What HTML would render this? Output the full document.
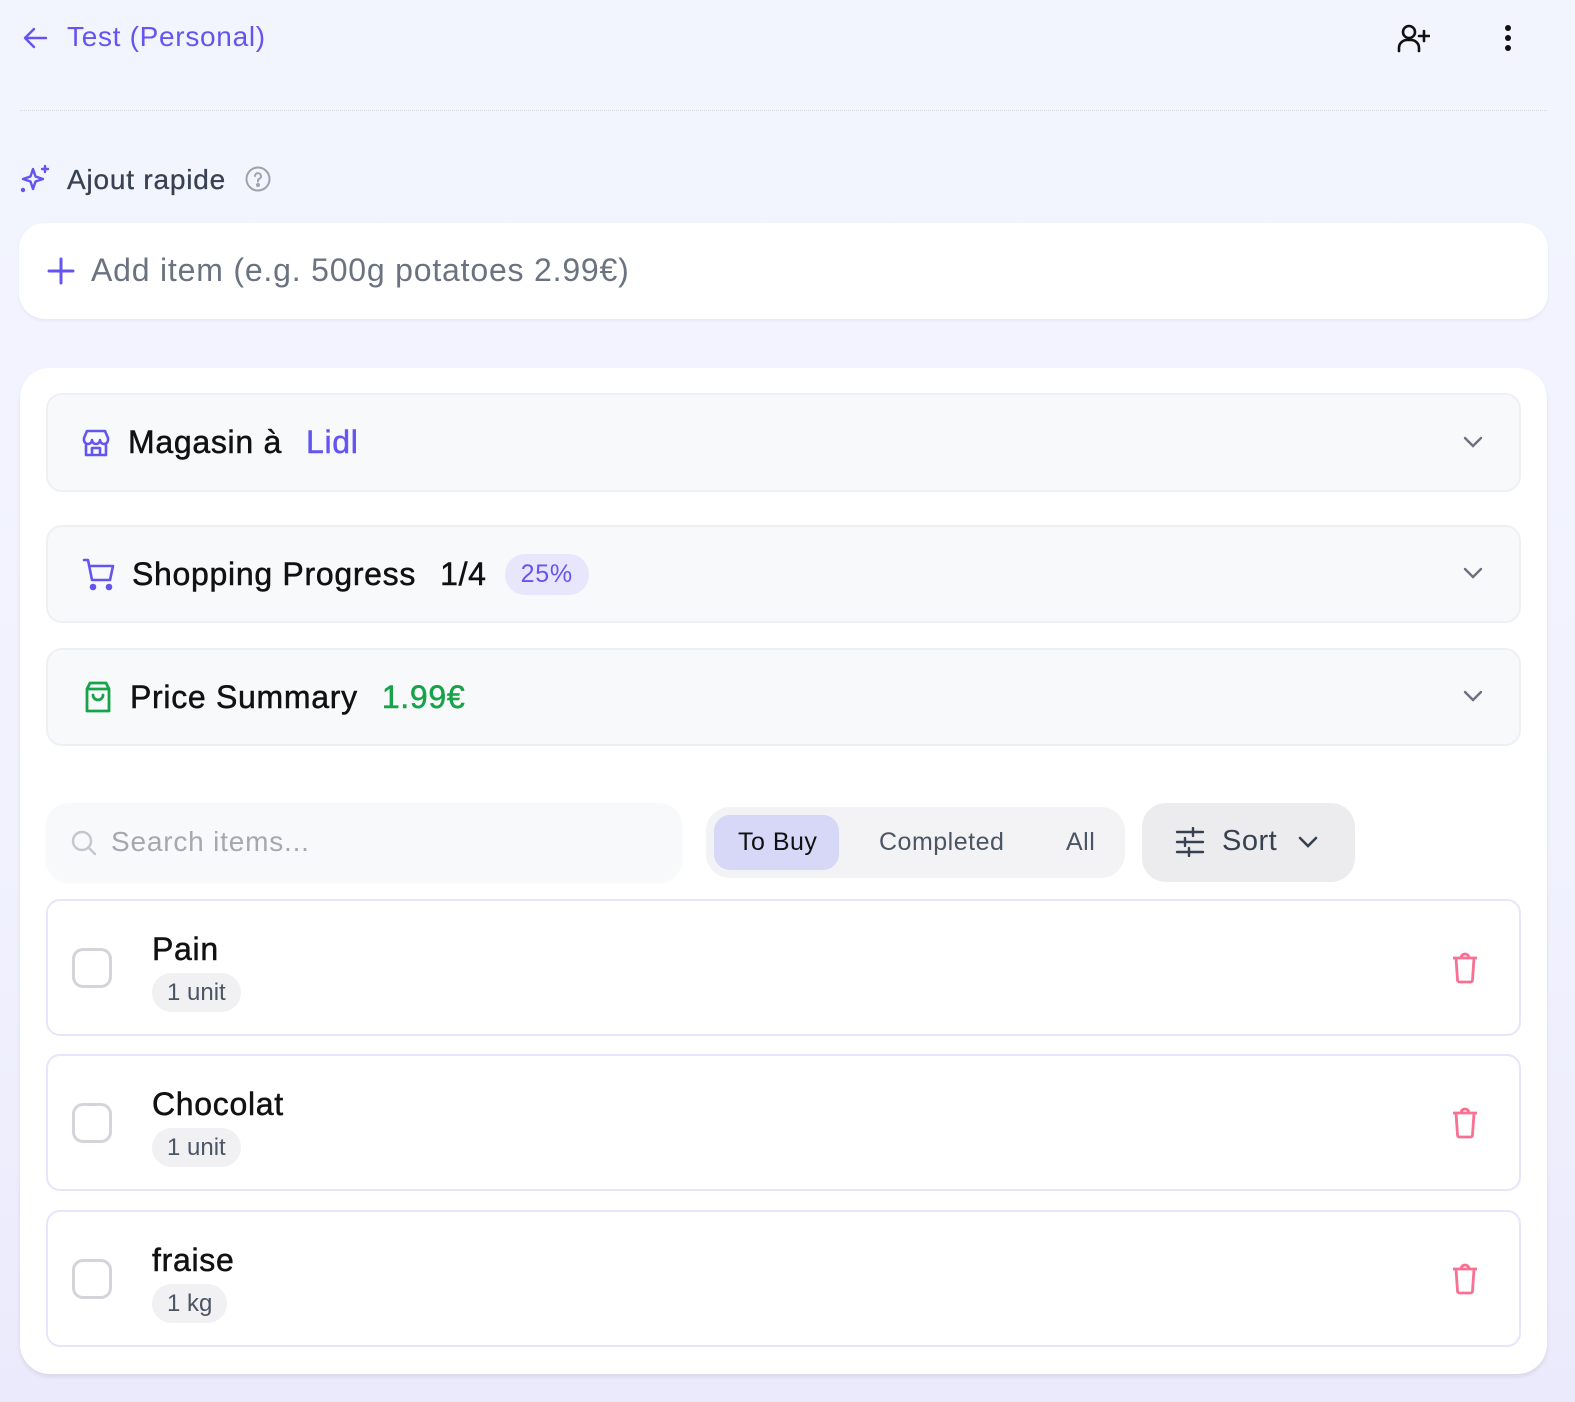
<!DOCTYPE html>
<html><head><meta charset="utf-8"><style>
*{box-sizing:border-box;margin:0;padding:0}
body{width:1575px;height:1402px;overflow:hidden;font-family:"Liberation Sans",sans-serif;background:linear-gradient(#f2f4fe 0%,#f1f2fe 60%,#ebeafc 100%);position:relative;color:#111827;letter-spacing:0.5px}
.a{position:absolute}
.sec{position:absolute;left:46px;width:1475px;background:#f8f9fb;border:2px solid #eef0f3;border-radius:16px}
.sec .t{position:absolute;top:0;height:100%;display:flex;align-items:center;font-size:32px;color:#111;-webkit-text-stroke:0.5px currentColor;letter-spacing:0.7px}
.chev{position:absolute;right:36px;top:50%;margin-top:-8px}
.item{position:absolute;left:46px;width:1475px;height:137px;background:#fff;border:2px solid #e7e5fb;border-radius:14px}
.cb{position:absolute;left:24px;top:47px;width:40px;height:40px;border:3px solid #d4d5da;border-radius:11px}
.nm{position:absolute;left:104px;top:30px;font-size:32px;color:#111;-webkit-text-stroke:0.5px #111;letter-spacing:0.7px}
.bd{position:absolute;left:104px;top:72px;height:39px;padding:0 15px;background:#f1f1f3;border-radius:20px;font-size:24px;line-height:39px;color:#4b5563;letter-spacing:0}
.tr{position:absolute;right:40px;top:50px}
</style></head><body>
<svg class="a" style="left:22px;top:26px" width="26" height="24" viewBox="0 0 26 24" fill="none" stroke="#6555f0" stroke-width="2.4" stroke-linecap="round" stroke-linejoin="round"><path d="M24 12H3M12 3l-9 9 9 9"/></svg>
<div class="a" style="left:67px;top:21px;font-size:28px;color:#6555f0;letter-spacing:0.7px">Test (Personal)</div>
<svg class="a" style="left:1396px;top:23px" width="34" height="30" viewBox="0 0 34 30" fill="none" stroke="#111" stroke-width="2.6" stroke-linecap="round"><circle cx="13" cy="9" r="6"/><path d="M3 28v-3a8 8 0 0 1 8-8h4a8 8 0 0 1 8 8v3M28 8v10M23 13h10"/></svg>
<svg class="a" style="left:1502px;top:24px" width="12" height="28"><circle cx="6" cy="4" r="3" fill="#111"/><circle cx="6" cy="14" r="3" fill="#111"/><circle cx="6" cy="24" r="3" fill="#111"/></svg>
<div class="a" style="left:20px;top:110px;width:1527px;border-top:1px dotted #d6d8de"></div>
<svg class="a" style="left:19px;top:164px" width="32" height="32" viewBox="0 0 32 32" fill="none" stroke="#6555f0" stroke-width="2.4" stroke-linejoin="round" stroke-linecap="round"><path d="M14 5l2.5 7.5L24 15l-7.5 2.5L14 25l-2.5-7.5L4 15l7.5-2.5z"/><path d="M26 2v6M23 5h6"/><circle cx="4" cy="26" r="1" fill="#6555f0"/></svg>
<div class="a" style="left:67px;top:164px;font-size:28px;color:#374151;letter-spacing:0.8px;-webkit-text-stroke:0.3px #374151">Ajout rapide</div>
<svg class="a" style="left:245px;top:166px" width="26" height="26" fill="none" stroke="#9ca3af" stroke-width="2"><circle cx="13" cy="13" r="11.5"/><path d="M10 10a3 3 0 1 1 4 3c-1 .5-1 1-1 2.5" stroke-linecap="round"/><circle cx="13" cy="19" r="1" fill="#9ca3af"/></svg>
<div class="a" style="left:19px;top:223px;width:1529px;height:96px;background:#fff;border-radius:26px;box-shadow:0 2px 3px rgba(0,0,0,.05)"></div>
<svg class="a" style="left:47px;top:257px" width="28" height="28" stroke="#6555f0" stroke-width="3" stroke-linecap="round"><path d="M14 2v24M2 14h24"/></svg>
<div class="a" style="left:91px;top:252px;font-size:32px;color:#6b7280;letter-spacing:0.8px">Add item (e.g. 500g potatoes 2.99€)</div>
<div class="a" style="left:20px;top:368px;width:1527px;height:1006px;background:#fff;border-radius:30px;box-shadow:0 3px 4px rgba(0,0,0,.08)"></div>
<div class="sec" style="top:393px;height:99px"><div class="t" style="left:32px">
<svg width="32" height="32" viewBox="0 0 32 32" fill="none" stroke="#6555f0" stroke-width="2.6" stroke-linejoin="round"><path d="M4 11l3-7h18l3 7v2a4 4 0 0 1-8 0 4 4 0 0 1-8 0 4 4 0 0 1-8 0zM6 16v12h20V16M12 28v-7h8v7"/></svg>
<span style="margin-left:16px">Magasin à</span><span style="margin-left:24px;color:#6555f0">Lidl</span></div>
<svg class="chev" width="20" height="14" fill="none" stroke="#6b7280" stroke-width="2.4" stroke-linecap="round"><path d="M2 3l8 8 8-8"/></svg></div>
<div class="sec" style="top:525px;height:98px"><div class="t" style="left:34px">
<svg width="34" height="34" viewBox="0 0 34 34" fill="none" stroke="#6555f0" stroke-width="2.6" stroke-linejoin="round" stroke-linecap="round"><path d="M2 3h4l4 20h18l3-14H8"/><circle cx="11" cy="30" r="2" fill="#6555f0"/><circle cx="27" cy="30" r="2" fill="#6555f0"/></svg>
<span style="margin-left:16px">Shopping Progress</span><span style="margin-left:24px">1/4</span><span style="margin-left:18px;background:#e8e6fd;color:#6555f0;font-size:25px;padding:6px 16px;border-radius:20px;-webkit-text-stroke:0">25%</span></div>
<svg class="chev" width="20" height="14" fill="none" stroke="#6b7280" stroke-width="2.4" stroke-linecap="round"><path d="M2 3l8 8 8-8"/></svg></div>
<div class="sec" style="top:648px;height:98px"><div class="t" style="left:34px">
<svg width="32" height="34" viewBox="0 0 32 34" fill="none" stroke="#16a34a" stroke-width="2.8" stroke-linejoin="round" stroke-linecap="round"><path d="M5 9l3-6h16l3 6v22H5zM5 9h22M11 15a5 5 0 0 0 10 0"/></svg>
<span style="margin-left:16px">Price Summary</span><span style="margin-left:24px;color:#16a34a">1.99€</span></div>
<svg class="chev" width="20" height="14" fill="none" stroke="#6b7280" stroke-width="2.4" stroke-linecap="round"><path d="M2 3l8 8 8-8"/></svg></div>
<div class="a" style="left:46px;top:803px;width:636px;height:79px;background:#f8f9fb;border-radius:24px;box-shadow:0 1px 3px rgba(0,0,0,.04)"></div>
<svg class="a" style="left:70px;top:829px" width="28" height="28" fill="none" stroke="#c4c7cd" stroke-width="2.4" stroke-linecap="round"><circle cx="12" cy="12" r="9"/><path d="M19 19l6 6"/></svg>
<div class="a" style="left:111px;top:826px;font-size:28px;color:#a5a8ae;letter-spacing:0.8px">Search items...</div>
<div class="a" style="left:706px;top:807px;width:419px;height:71px;background:#f3f3f5;border-radius:24px"></div>
<div class="a" style="left:714px;top:815px;width:125px;height:55px;background:#d7d7f8;border-radius:16px"></div>
<div class="a" style="left:738px;top:828px;font-size:25px;color:#111">To Buy</div>
<div class="a" style="left:879px;top:828px;font-size:25px;color:#4b5563">Completed</div>
<div class="a" style="left:1066px;top:828px;font-size:25px;color:#4b5563">All</div>
<div class="a" style="left:1142px;top:803px;width:213px;height:79px;background:#ececef;border-radius:24px"></div>
<svg class="a" style="left:1175px;top:827px" width="30" height="30" fill="none" stroke="#374151" stroke-width="2.4" stroke-linecap="round"><path d="M2 5h26M2 15h26M2 25h26M18 1v8M10 11v8M14 21v8"/></svg>
<div class="a" style="left:1222px;top:825px;font-size:29px;color:#374151">Sort</div>
<svg class="a" style="left:1298px;top:835px" width="20" height="14" fill="none" stroke="#374151" stroke-width="2.6" stroke-linecap="round"><path d="M2 3l8 8 8-8"/></svg>
<div class="item" style="top:899px"><div class="cb"></div><div class="nm">Pain</div><div class="bd">1 unit</div>
<svg class="tr" width="28" height="34" viewBox="0 0 28 34" fill="none" stroke="#f87193" stroke-width="2.8" stroke-linejoin="round"><path d="M2 7h24M5 7l1.5 22a2 2 0 0 0 2 2h11a2 2 0 0 0 2-2L23 7M10 7a4 4 0 0 1 8 0"/></svg></div>
<div class="item" style="top:1054px"><div class="cb"></div><div class="nm">Chocolat</div><div class="bd">1 unit</div>
<svg class="tr" width="28" height="34" viewBox="0 0 28 34" fill="none" stroke="#f87193" stroke-width="2.8" stroke-linejoin="round"><path d="M2 7h24M5 7l1.5 22a2 2 0 0 0 2 2h11a2 2 0 0 0 2-2L23 7M10 7a4 4 0 0 1 8 0"/></svg></div>
<div class="item" style="top:1210px"><div class="cb"></div><div class="nm">fraise</div><div class="bd">1 kg</div>
<svg class="tr" width="28" height="34" viewBox="0 0 28 34" fill="none" stroke="#f87193" stroke-width="2.8" stroke-linejoin="round"><path d="M2 7h24M5 7l1.5 22a2 2 0 0 0 2 2h11a2 2 0 0 0 2-2L23 7M10 7a4 4 0 0 1 8 0"/></svg></div>
</body></html>
